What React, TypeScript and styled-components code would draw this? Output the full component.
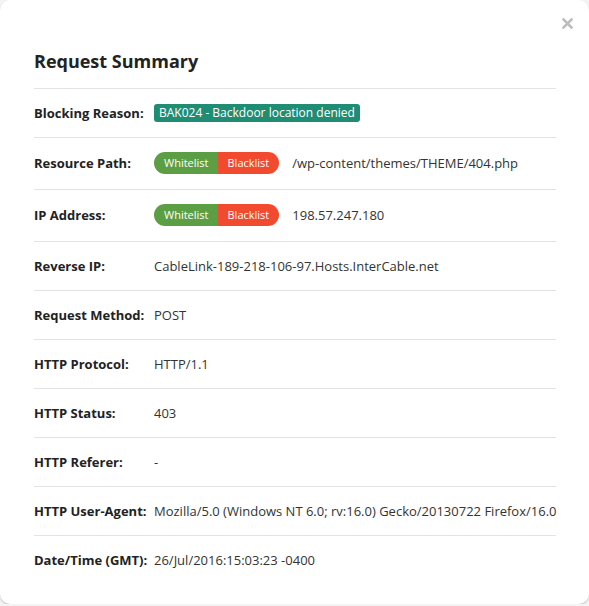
import React from "react";
import styled, { createGlobalStyle } from "styled-components";

const Global = createGlobalStyle`
  html, body { margin: 0; padding: 0; background: #f4f4f4; }
  body { font-family: "Open Sans", "Liberation Sans", sans-serif; color: #333; }
  * { box-sizing: border-box; }
`;

const Modal = styled.div`
  position: relative;
  width: 589px;
  height: 604px;
  background: #fff;
  border-radius: 10px;
  box-shadow: 0 1px 2px rgba(0, 0, 0, 0.22);
  padding: 48px 33px 0 34px;
`;

const Close = styled.button`
  position: absolute;
  top: 17px;
  right: 16px;
  width: 12px;
  height: 12px;
  padding: 0;
  border: 0;
  background: transparent;
  cursor: pointer;
  display: flex;
  align-items: center;
  justify-content: center;
`;

const Title = styled.h2`
  margin: 0 0 14px;
  font-size: 18px;
  line-height: 26px;
  font-weight: 700;
  color: #222;
`;

const Row = styled.div<{ $tall?: boolean }>`
  display: grid;
  grid-template-columns: 120px 1fr;
  align-items: center;
  border-top: 1px solid #e3e3e3;
  padding: ${(p) => (p.$tall ? "14px 0 15px" : "13px 0")};
  min-height: ${(p) => (p.$tall ? "52px" : "49px")};
`;

const Label = styled.div`
  font-size: 13px;
  line-height: 22px;
  font-weight: 700;
  color: #222;
  white-space: nowrap;
`;

const Value = styled.div`
  display: flex;
  align-items: center;
  font-size: 13px;
  line-height: 22px;
  color: #333;
  white-space: nowrap;
`;

const Badge = styled.span`
  display: inline-block;
  background: #1f8c74;
  color: #fff;
  font-size: 12px;
  line-height: 18px;
  padding: 0 5px;
  border-radius: 3px;
`;

const PillGroup = styled.span`
  display: inline-flex;
  height: 22px;
  border-radius: 11px;
  overflow: hidden;
  margin-right: 13px;
`;

const Pill = styled.span<{ $tone: "green" | "red" }>`
  display: inline-flex;
  align-items: center;
  padding-left: 10px;
  padding-right: ${(p) => (p.$tone === "green" ? "9px" : "10px")};
  background: ${(p) => (p.$tone === "green" ? "#5c9e43" : "#f24a2f")};
  color: #fff;
  font-size: 11px;
`;

const ListToggle = () => (
  <PillGroup>
    <Pill $tone="green">Whitelist</Pill>
    <Pill $tone="red">Blacklist</Pill>
  </PillGroup>
);

const rows: { label: string; value: string }[] = [
  { label: "Reverse IP:", value: "CableLink-189-218-106-97.Hosts.InterCable.net" },
  { label: "Request Method:", value: "POST" },
  { label: "HTTP Protocol:", value: "HTTP/1.1" },
  { label: "HTTP Status:", value: "403" },
  { label: "HTTP Referer:", value: "-" },
  {
    label: "HTTP User-Agent:",
    value: "Mozilla/5.0 (Windows NT 6.0; rv:16.0) Gecko/20130722 Firefox/16.0",
  },
  { label: "Date/Time (GMT):", value: "26/Jul/2016:15:03:23 -0400" },
];

export default function App() {
  return (
    <>
      <Global />
      <Modal>
        <Close aria-label="Close">
          <svg width="11" height="11" viewBox="0 0 11 11">
            <path
              d="M1.5 1.5 L9.5 9.5 M9.5 1.5 L1.5 9.5"
              stroke="#bdbdbd"
              strokeWidth="2.6"
              strokeLinecap="square"
            />
          </svg>
        </Close>
        <Title>Request Summary</Title>
        <Row>
          <Label>Blocking Reason:</Label>
          <Value>
            <Badge>BAK024 - Backdoor location denied</Badge>
          </Value>
        </Row>
        <Row $tall>
          <Label>Resource Path:</Label>
          <Value>
            <ListToggle />
            /wp-content/themes/THEME/404.php
          </Value>
        </Row>
        <Row $tall>
          <Label>IP Address:</Label>
          <Value>
            <ListToggle />
            198.57.247.180
          </Value>
        </Row>
        {rows.map((r) => (
          <Row key={r.label}>
            <Label>{r.label}</Label>
            <Value>{r.value}</Value>
          </Row>
        ))}
      </Modal>
    </>
  );
}
